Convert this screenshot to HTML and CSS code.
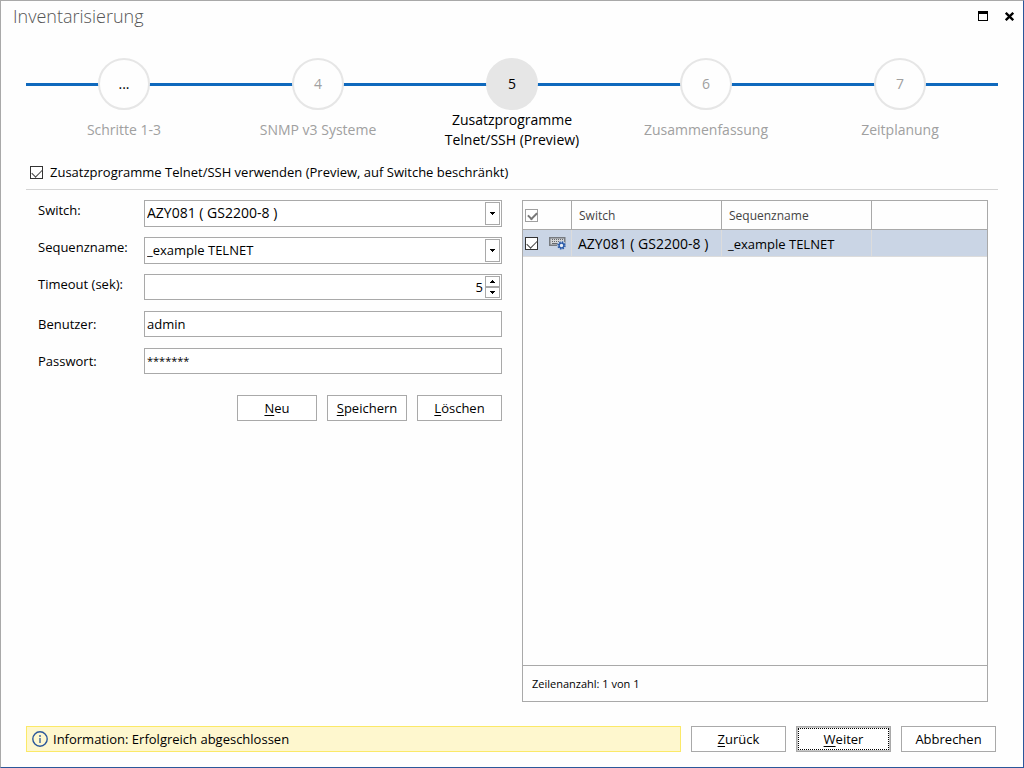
FILE: index.html
```html
<!DOCTYPE html>
<html lang="de">
<head>
<meta charset="utf-8">
<meta name="viewport" content="width=device-width, initial-scale=1">
<title>Inventarisierung</title>
<link rel="stylesheet" href="styles.css">
</head>
<body>
<div class="window">
  <header class="titlebar">
    <h1 class="title">Inventarisierung</h1>
    <div class="window-controls">
      <button class="icon-button" type="button" aria-label="Maximieren">
        <svg width="10" height="10" viewBox="0 0 10 10" shape-rendering="crispEdges"><path d="M0 0h10v10H0zM1 3v6h8V3z" fill="#000" fill-rule="evenodd"/></svg>
      </button>
      <button class="icon-button" type="button" aria-label="Schließen">
        <svg width="9" height="9" viewBox="0 0 9 9"><path d="M.8.8l7.4 7.4M8.2.8L.8 8.2" stroke="#000" stroke-width="2.3" fill="none"/></svg>
      </button>
    </div>
  </header>

  <ol class="steps">
    <li class="step"><span class="step-circle first">...</span><span class="step-label">Schritte 1-3</span></li>
    <li class="step"><span class="step-circle">4</span><span class="step-label">SNMP v3 Systeme</span></li>
    <li class="step active"><span class="step-circle">5</span><span class="step-label">Zusatzprogramme Telnet/SSH (Preview)</span></li>
    <li class="step"><span class="step-circle">6</span><span class="step-label">Zusammenfassung</span></li>
    <li class="step"><span class="step-circle">7</span><span class="step-label">Zeitplanung</span></li>
  </ol>

  <label class="enable">
    <input class="check" type="checkbox" checked>
    <span>Zusatzprogramme Telnet/SSH verwenden (Preview, auf Switche beschränkt)</span>
  </label>

  <main class="content">
    <form class="form">
      <div class="fields">
        <label class="field-label raised" for="switch">Switch:</label>
        <div class="field tall">
          <select class="control device" id="switch"><option>AZY081 ( GS2200-8 )</option></select>
          <span class="drop"><svg width="5" height="3" viewBox="0 0 5 3" shape-rendering="crispEdges"><path d="M0 0h5v1H4v1H3v1H2V2H1V1H0z"/></svg></span>
        </div>

        <label class="field-label raised" for="sequence">Sequenzname:</label>
        <div class="field tall">
          <select class="control" id="sequence"><option>_example TELNET</option></select>
          <span class="drop"><svg width="5" height="3" viewBox="0 0 5 3" shape-rendering="crispEdges"><path d="M0 0h5v1H4v1H3v1H2V2H1V1H0z"/></svg></span>
        </div>

        <label class="field-label raised" for="timeout">Timeout (sek):</label>
        <div class="field">
          <input class="control number" id="timeout" type="text" inputmode="numeric" value="5">
          <span class="spinner">
            <button class="spin" type="button" aria-label="Erhöhen"><svg width="5" height="3" viewBox="0 0 5 3" shape-rendering="crispEdges"><path d="M2 0h1v1h1v1h1v1H0V2h1V1h1z"/></svg></button>
            <button class="spin" type="button" aria-label="Verringern"><svg width="5" height="3" viewBox="0 0 5 3" shape-rendering="crispEdges"><path d="M0 0h5v1H4v1H3v1H2V2H1V1H0z"/></svg></button>
          </span>
        </div>

        <label class="field-label" for="user">Benutzer:</label>
        <div class="field"><input class="control" id="user" type="text" value="admin"></div>

        <label class="field-label" for="password">Passwort:</label>
        <div class="field"><input class="control masked" id="password" type="text" value="*******" autocomplete="off"></div>
      </div>
      <div class="form-actions">
        <button class="button" type="button"><u>N</u>eu</button>
        <button class="button" type="button"><u>S</u>peichern</button>
        <button class="button wide" type="button"><u>L</u>öschen</button>
      </div>
    </form>

    <section class="grid-panel">
      <table class="grid">
        <colgroup><col class="col-check"><col class="col-text"><col class="col-text"><col></colgroup>
        <thead>
          <tr>
            <th><span class="cell-icons"><input class="check muted" type="checkbox" checked aria-label="Alle auswählen"></span></th>
            <th>Switch</th>
            <th>Sequenzname</th>
            <th></th>
          </tr>
        </thead>
        <tbody>
          <tr>
            <td>
              <span class="cell-icons">
                <input class="check" type="checkbox" checked aria-label="AZY081 auswählen">
                <svg width="17" height="14" viewBox="0 0 17 14">
                  <path d="M.75 1.75h15v7.5h-15z" fill="#d3d5d7" stroke="#777b80" stroke-width="1.5"/>
                  <path d="M3 3.5h11M3 5.5h11" stroke="#66696d" stroke-dasharray="1 1"/>
                  <path d="M3 7.5h6" stroke="#66696d"/>
                  <circle cx="12.5" cy="9.5" r="4.5" fill="#cad5e5"/>
                  <circle cx="12.5" cy="9.5" r="3.4" fill="none" stroke="#2b5ba8" stroke-width="1.6" stroke-dasharray="1.4 1.27"/>
                  <circle cx="12.5" cy="9.5" r="2.4" fill="#e6ecf5" stroke="#2b5ba8" stroke-width="1.4"/>
                </svg>
              </span>
            </td>
            <td class="device">AZY081 ( GS2200-8 )</td>
            <td>_example TELNET</td>
            <td></td>
          </tr>
        </tbody>
      </table>
      <div class="grid-footer">Zeilenanzahl: 1 von 1</div>
    </section>
  </main>

  <footer class="footer">
    <div class="status" role="status">
      <svg width="16" height="16" viewBox="0 0 16 16"><circle cx="8" cy="8" r="7.2" fill="none" stroke="#2b579a" stroke-width="1.4"/><path d="M8 4v2M8 7v5" stroke="#2b579a" stroke-width="1.3"/></svg>
      <span>Information: Erfolgreich abgeschlossen</span>
    </div>
    <button class="button nav" type="button"><u>Z</u>urück</button>
    <button class="button nav default" type="button"><span class="focus"><u>W</u>eiter</span></button>
    <button class="button nav" type="button">Abbrechen</button>
  </footer>
</div>
</body>
</html>
```
FILE: styles.css
```css
* { box-sizing: border-box; }

body {
  margin: 0;
  font: 13px/20px "Open Sans", "Noto Sans", sans-serif;
  color: #000;
}

button, input, select { font: inherit; color: inherit; }
svg { display: block; flex: none; }

.window {
  display: flex;
  flex-direction: column;
  min-height: 100vh;
  border: 1px solid #a9a9a9;
  border-right-color: #2b579a;
  border-bottom-color: #2b579a;
  background: #fefefe;
}

.titlebar {
  display: flex;
  justify-content: space-between;
  align-items: center;
  height: 30px;
  padding: 0 9px 0 12px;
}
.title {
  margin: 0;
  font-size: 18px;
  font-weight: 300;
  line-height: 30px;
  color: #555;
}
.window-controls { display: flex; gap: 17px; }
.icon-button {
  display: flex;
  padding: 0;
  border: 0;
  background: none;
  align-items: center;
}

.steps {
  display: flex;
  margin: 27px 25px 0;
  padding: 0 1px;
  list-style: none;
  background: linear-gradient(#0f69bd, #0f69bd) 0 25px / 100% 3px no-repeat;
}
.step {
  flex: 1;
  display: flex;
  flex-direction: column;
  align-items: center;
  color: #a0a0a0;
}
.step-circle {
  display: flex;
  align-items: center;
  justify-content: center;
  width: 52px;
  height: 52px;
  border: 2px solid #e6e6e6;
  border-radius: 50%;
  background: #fefefe;
  font-size: 14px;
}
.step-circle.first { color: #000; }
.step-label {
  display: flex;
  align-items: center;
  max-width: 160px;
  min-height: 40px;
  font-size: 14px;
  text-align: center;
}
.step.active { color: #000; }
.step.active .step-circle { background: #e6e6e6; }

.enable {
  display: flex;
  align-items: center;
  gap: 7px;
  height: 40px;
  margin: 0 25px;
  padding: 5px 4px 0;
  border-bottom: 1px solid #d4d4d4;
}

.check {
  flex: none;
  appearance: none;
  width: 13px;
  height: 13px;
  margin: 0;
  border: 1px solid #333;
  background: #fff;
}
.check:checked::before {
  content: "";
  display: block;
  width: 9px;
  height: 5px;
  margin: 2px 1px;
  border: solid #444;
  border-width: 0 0 1px 1px;
  transform: rotate(-45deg);
}
.check.muted { border-color: #a0a0a0; }
.check.muted:checked::before {
  width: 7px;
  height: 4px;
  margin: 2px;
  border-color: #777;
  border-width: 0 0 2px 2px;
}

.content {
  flex: 1;
  display: grid;
  grid-template-columns: 464fr 466fr;
  gap: 20px;
  padding: 10px 35px 0 37px;
}

.fields {
  display: grid;
  grid-template-columns: 96px 1fr;
  grid-auto-rows: 27px;
  column-gap: 10px;
  row-gap: 10px;
}
.field-label { padding-top: 3px; }
.field-label.raised { padding-top: 0; }
.field {
  display: flex;
  height: 26px;
  border: 1px solid #a9a9a9;
  background: #fff;
}
.field.tall { height: 27px; }
.field:has(.drop) { position: relative; }
.control {
  flex: 1;
  min-width: 0;
  appearance: none;
  border: 0;
  padding: 0 2px;
  background: none;
  outline: 0;
}
select.control { padding-bottom: 2px; }
.device { font-size: 14px; }
.masked { font-size: 11px; }
.number { padding: 0 1px; text-align: right; }
.drop {
  position: absolute;
  top: 1px;
  right: 1px;
  bottom: 1px;
  width: 15px;
  display: flex;
  align-items: center;
  justify-content: center;
  border: 1px solid #a9a9a9;
  pointer-events: none;
}
.spinner {
  display: flex;
  flex-direction: column;
  width: 15px;
  margin: 1px;
}
.spin {
  flex: 1;
  display: flex;
  align-items: center;
  justify-content: center;
  padding: 0;
  border: 1px solid #a9a9a9;
  background: #fff;
}

.form-actions {
  display: flex;
  justify-content: flex-end;
  gap: 10px;
  margin-top: 20px;
}
.button {
  width: 80px;
  height: 26px;
  padding: 0;
  border: 1px solid #a9a9a9;
  background: #fff;
}
.button.wide { width: 85px; }
.button.nav { width: 95px; }
.button.default { border: 2px solid #c6c6c6; outline: 1px solid #a9a9a9; outline-offset: -1px; }
.focus {
  display: flex;
  align-items: center;
  justify-content: center;
  height: 100%;
  border: 1px dotted #000;
}
u { text-underline-offset: 2px; }

.grid-panel {
  display: flex;
  flex-direction: column;
  justify-content: space-between;
  border: 1px solid #a9a9a9;
}
.grid {
  width: 100%;
  table-layout: fixed;
  border-collapse: separate;
  border-spacing: 0;
}
.col-check { width: 49px; }
.col-text { width: 150px; }
.grid th {
  height: 29px;
  padding: 1px 7px 0;
  border-right: 1px solid #a9a9a9;
  border-bottom: 1px solid #a9a9a9;
  font-size: 12px;
  font-weight: 400;
  text-align: left;
  color: #444;
}
.grid td {
  height: 27px;
  padding: 1px 6px 0;
  border-right: 1px solid #dcdcdc;
  border-bottom: 1px solid #dcdcdc;
  background: #cad5e5;
}
.grid th:last-child, .grid td:last-child { border-right: 0; }
.grid th:first-child, .grid td:first-child { padding: 0 2px; }
.cell-icons { display: flex; align-items: center; gap: 11px; }
.grid-footer {
  height: 36px;
  padding: 0 9px;
  border-top: 1px solid #a9a9a9;
  font-size: 11px;
  line-height: 36px;
}

.footer {
  display: flex;
  gap: 10px;
  padding: 24px 27px 15px 25px;
}
.status {
  flex: 1;
  display: flex;
  align-items: center;
  gap: 5px;
  padding: 0 5px;
  border: 1px solid #fbe968;
  background: #fef7ce;
}
```
